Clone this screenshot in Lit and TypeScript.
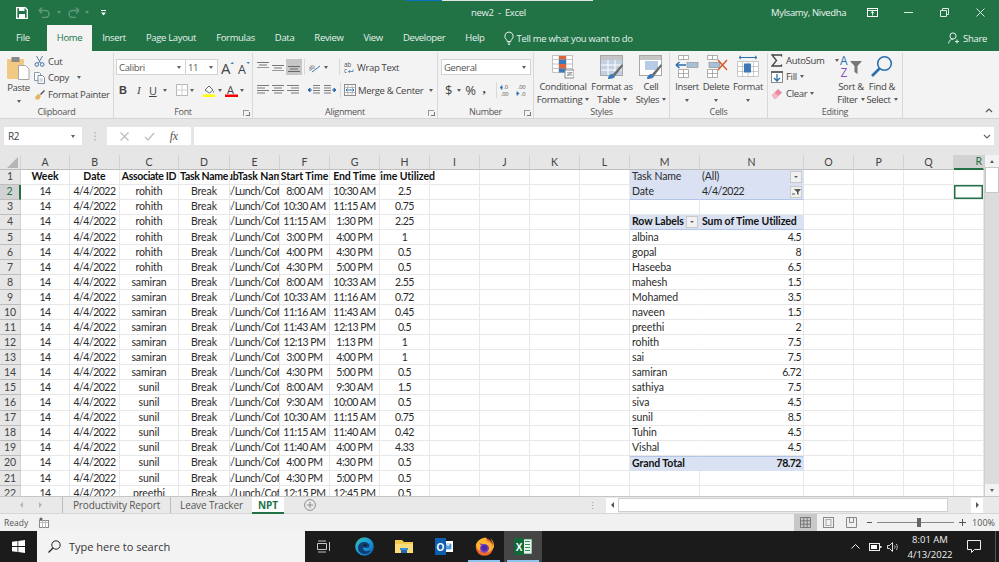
import { LitElement, html, css, svg } from 'lit';
import { customElement } from 'lit/decorators.js';

const ic = (w: number, h: number, body: unknown) =>
  html`<svg class="ic" width=${w} height=${h} viewBox="0 0 ${w} ${h}">${body}</svg>`;

const caret = html`<i class="caret"></i>`;
const gap = (w: number) => html`<span class="sp" style="width:${w}px"></span>`;

const COLS = ['A', 'B', 'C', 'D', 'E', 'F', 'G', 'H', 'I', 'J', 'K', 'L', 'M', 'N', 'O', 'P', 'Q', 'R'];

const TIMES = [
  ['8:00 AM', '10:30 AM', '2.5'], ['10:30 AM', '11:15 AM', '0.75'], ['11:15 AM', '1:30 PM', '2.25'],
  ['3:00 PM', '4:00 PM', '1'], ['4:00 PM', '4:30 PM', '0.5'], ['4:30 PM', '5:00 PM', '0.5'],
  ['8:00 AM', '10:33 AM', '2.55'], ['10:33 AM', '11:16 AM', '0.72'], ['11:16 AM', '11:43 AM', '0.45'],
  ['11:43 AM', '12:13 PM', '0.5'], ['12:13 PM', '1:13 PM', '1'], ['3:00 PM', '4:00 PM', '1'],
  ['4:30 PM', '5:00 PM', '0.5'], ['8:00 AM', '9:30 AM', '1.5'], ['9:30 AM', '10:00 AM', '0.5'],
  ['10:30 AM', '11:15 AM', '0.75'], ['11:15 AM', '11:40 AM', '0.42'], ['11:40 AM', '4:00 PM', '4.33'],
  ['4:00 PM', '4:30 PM', '0.5'], ['4:30 PM', '5:00 PM', '0.5'], ['12:15 PM', '12:45 PM', '0.5'],
];

const HEADERS = ['Week', 'Date', 'Associate ID', 'Task Name', 'SubTask Name', 'Start Time', 'End Time', 'Time Utilized'];

const PIVOT: [string, string][] = [
  ['albina', '4.5'], ['gopal', '8'], ['Haseeba', '6.5'], ['mahesh', '1.5'], ['Mohamed', '3.5'],
  ['naveen', '1.5'], ['preethi', '2'], ['rohith', '7.5'], ['sai', '7.5'], ['samiran', '6.72'],
  ['sathiya', '7.5'], ['siva', '4.5'], ['sunil', '8.5'], ['Tuhin', '4.5'], ['Vishal', '4.5'],
];

function who(row: number) {
  if (row <= 7) return 'rohith';
  if (row <= 14) return 'samiran';
  if (row <= 21) return 'sunil';
  return 'preethi';
}

const lines = (rows: [number, number][]) =>
  rows.map(([x, w], i) => svg`<rect x=${x} y=${1 + i * 2.5} width=${w} height="1" fill="#7b7b7b"/>`);

const filterBtn = (on = false) => html`<span class="fbtn">${on
  ? ic(9, 7, svg`<path d="M2 1h7L6.500 4v3L5 6V4z" fill="#555"/><path d="M0 6h3" stroke="#555"/>`)
  : html`<i class="caret"></i>`}</span>`;

const tabs = [
  ['File', ''], ['Home', 'on'], ['Insert', ''], ['Page Layout', ''], ['Formulas', ''],
  ['Data', ''], ['Review', ''], ['View', ''], ['Developer', ''], ['Help', ''],
];

@customElement('app-root')
export class AppRoot extends LitElement {
  static styles = css`
    :host {
      display: flex;
      flex-direction: column;
      width: 999px;
      height: 562px;
      overflow: hidden;
      position: relative;
      font-family: "Open Sans", "Noto Sans", sans-serif;
      font-size: 9.5px;
      letter-spacing: -0.33px;
      color: #444;
      background: #e6e6e6;
    }
    .ic { display: block; flex: none; }
    .sp { flex: none; display: block; }
    .caret {
      display: inline-block;
      flex: none;
      width: 0;
      height: 0;
      border-top: 3px solid #5f5f5f;
      border-left: 2.5px solid transparent;
      border-right: 2.5px solid transparent;
    }
    /* title + tabs */
    .green { background: #217346; color: #fff; height: 51px; flex: none; }
    .progress { position: absolute; left: 405px; top: 0; width: 188px; height: 1px; background: #dfe7e3; }
    .progress i { display: block; width: 37px; height: 1px; background: #0a72c4; }
    .title { display: flex; align-items: center; height: 25px; position: relative; }
    .qat { display: flex; align-items: center; padding-left: 16px; width: 400px; }
    .doc { position: absolute; left: 471px; top: 6px; line-height: 13px; color: #e8f0ec; }
    .win { margin-left: auto; display: flex; align-items: center; }
    .user { color: #eef4f0; width: 83px; white-space: nowrap; }
    .win .b { width: 36px; display: flex; justify-content: center; }
    .tabs { display: flex; align-items: flex-start; height: 26px; padding-left: 6px; position: relative; }
    .tab { padding: 0 10px; height: 26px; line-height: 26px; color: #e7f0eb; white-space: nowrap; }
    .tab.on { background: #f3f3f3; color: #217346; margin: 0 0 0 7px; }
    .tell { display: flex; align-items: center; gap: 2px; height: 26px; margin-left: 8px; color: #e7f0eb; }
    .share { margin-left: auto; display: flex; align-items: center; gap: 4px; height: 26px; padding-right: 12px; color: #eef4f0; }
    /* ribbon */
    .ribbon {
      display: flex;
      height: 67px;
      flex: none;
      background: #f3f3f3;
      border-bottom: 1px solid #d4d4d4;
      position: relative;
    }
    .grp {
      display: flex;
      flex-direction: column;
      flex: none;
      box-sizing: border-box;
      margin-top: 2px;
      border-right: 1px solid #d8d8d8;
      position: relative;
    }
    .body { flex: 1; display: flex; min-height: 0; }
    .lbl { height: 11px; line-height: 10px; text-align: center; font-size: 9px; color: #555; }
    .launch { position: absolute; right: 3px; bottom: 2px; width: 5px; height: 5px; border: 1px solid #999; border-width: 1px 0 0 1px; }
    .launch::after { content: ""; position: absolute; right: -1px; bottom: 0; width: 3px; height: 3px; border: solid #777; border-width: 0 1px 1px 0; }
    .big { display: flex; flex-direction: column; align-items: center; text-align: center; line-height: 12.5px; flex: none; }
    .big .t { display: flex; flex-direction: column; align-items: center; margin-top: 2px; white-space: nowrap; }
    .big .t span { display: flex; align-items: center; gap: 3px; }
    .big .t > .caret { margin-top: 5px; }
    .stack { display: flex; flex-direction: column; white-space: nowrap; margin-top: -3px; }
    .stack > div { display: flex; align-items: center; gap: 3px; height: 16.5px; flex: none; }
    .g-clip { width: 114px; }
    .g-clip .body { padding: 3px 0 0 5px; gap: 2px; }
    .g-font { width: 139px; }
    .g-font .body, .g-align .body, .g-num .body { flex-direction: column; padding-top: 6px; gap: 7px; }
    .row { display: flex; align-items: center; height: 16px; }
    .combo {
      height: 16px;
      box-sizing: border-box;
      background: #fff;
      border: 1px solid #d2d2d2;
      display: flex;
      align-items: center;
      justify-content: space-between;
      padding: 0 4px 0 2px;
      font-size: 9.5px;
      color: #555;
    }
    .g-font .body { padding-left: 2px; }
    .g-align { width: 185px; }
    .g-align .body { padding-left: 4px; position: relative; }
    .hl { background: #c6c6c6; width: 16px; height: 16px; display: flex; align-items: center; justify-content: center; }
    .vsep { width: 1px; height: 16px; background: #d8d8d8; flex: none; }
    .g-num { width: 96px; }
    .g-num .body { padding-left: 3px; }
    .g-styles { width: 136px; }
    .g-styles .body { padding: 2px 0 0 4px; gap: 2px; }
    .g-cells { width: 98px; }
    .g-cells .body { padding: 2px 0 0 4px; gap: 2px; }
    .g-edit { width: 135px; }
    .g-edit .body { padding: 2px 0 0 3px; }
    .g-edit .stack { margin-top: -3px; width: 65px; }
    .collapse { position: absolute; right: 6px; bottom: 5px; }
    /* formula bar */
    .fbar { display: flex; align-items: stretch; height: 18px; margin-top: 8px; padding: 0 5px 0 4px; flex: none; }
    .name {
      width: 78px;
      background: #fff;
      display: flex;
      align-items: center;
      justify-content: space-between;
      padding: 0 7px 0 4px;
      box-sizing: border-box;
      font-size: 10px;
    }
    .grip { width: 25px; display: flex; justify-content: center; align-items: center; }
    .fx { width: 84px; background: #fff; display: flex; align-items: center; justify-content: space-around; padding: 0 6px; box-sizing: border-box; }
    .fx em { font: italic 12px "Liberation Serif", serif; color: #555; }
    .input { flex: 1; margin-left: 3px; background: #fff; display: flex; align-items: center; justify-content: flex-end; padding-right: 3px; }
    /* sheet */
    .sheet { flex: none; height: 341px; margin-top: 10px; display: flex; overflow: hidden; background: #fff; }
    .grid {
      display: grid;
      width: 984px;
      grid-template-columns: 21px 49px 50px 59px 51px 50px 50px 50px 50px 50px 50px 50px 50px 70px 104px 50px 50px 50px 30px;
      grid-template-rows: 14.5px repeat(22, 15.07px);
      font-family: Lato, "Liberation Sans", sans-serif;
      font-size: 10.5px;
      letter-spacing: -0.08px;
      color: #2b2b2b;
      overflow: hidden;
    }
    .hd {
      background: #e6e6e6;
      border-right: 1px solid #d2d2d2;
      border-bottom: 1px solid #bdbdbd;
      display: flex;
      align-items: center;
      justify-content: center;
      color: #444;
      box-sizing: border-box;
      font-size: 10.5px;
      line-height: 1;
    }
    .hd.sel { background: #d2d2d2; color: #217346; border-bottom: 2px solid #217346; justify-content: flex-end; padding-right: 1px; }
    .hd.rsel { background: #d2d2d2; color: #217346; border-right: 2px solid #217346; }
    .corner { position: relative; }
    .corner::after {
      content: "";
      position: absolute;
      right: 2px;
      bottom: 1px;
      border-left: 11px solid transparent;
      border-bottom: 11px solid #b5b5b5;
    }
    .c {
      border-right: 1px solid #e8e8e8;
      border-bottom: 1px solid #e8e8e8;
      box-sizing: border-box;
      display: flex;
      align-items: center;
      justify-content: center;
      white-space: nowrap;
      overflow: hidden;
      line-height: 1;
      min-width: 0;
    }
    .c.n { letter-spacing: -0.48px; }
    .c.tight { letter-spacing: -0.35px; }
    .c.sub { letter-spacing: -0.4px; }
    .c.b { font-weight: 700; color: #111; }
    .c.free { overflow: visible; clip-path: inset(0 -60px 0 0); position: relative; z-index: 1; }
    .c.l { justify-content: flex-start; padding-left: 2px; }
    .c.r { justify-content: flex-end; padding-right: 2px; }
    .c.blue { background: #d9e1f2; border-color: #d9e1f2; }
    .c.blue.tl { border-bottom-color: #b4c6e7; }
    .c.topline { border-top: 1px solid #b4c6e7; }
    .c.nor { border-right-color: transparent; }
    .c.active { box-shadow: inset 0 0 0 1.5px #217346; }
    .c.between { justify-content: space-between; padding-right: 1px; }
    .fbtn {
      width: 12px;
      height: 12px;
      box-sizing: border-box;
      background: #f1f1f1;
      border: 1px solid #c9c9c9;
      display: flex;
      align-items: center;
      justify-content: center;
      flex: none;
    }
    .fbtn .caret { border-top-width: 2.5px; border-left-width: 2px; border-right-width: 2px; }
    .vs { width: 15px; background: #dcdcdc; display: flex; flex-direction: column; align-items: stretch; border-left: 1px solid #d0d0d0; box-sizing: border-box; }
    .arrow { height: 12px; background: #f3f3f3; display: flex; align-items: center; justify-content: center; flex: none; }
    .thumb { height: 26px; background: #fff; border: 1px solid #c8c8c8; box-sizing: border-box; flex: none; }
    .up { transform: rotate(180deg); }
    .vs .fill { flex: 1; }
    /* sheet tabs */
    .stabs { flex: none; height: 18px; display: flex; align-items: stretch; background: #e9e9e9; border-top: 1px solid #c6c6c6; box-sizing: border-box; border-bottom: 1px solid #d6d6d6; }
    .nav { width: 62px; display: flex; align-items: center; justify-content: center; gap: 16px; box-sizing: border-box; }
    .tri-l { width: 0; height: 0; border-right: 3px solid #b5b5b5; border-top: 3px solid transparent; border-bottom: 3px solid transparent; }
    .tri-r { width: 0; height: 0; border-left: 3px solid #b5b5b5; border-top: 3px solid transparent; border-bottom: 3px solid transparent; }
    .tri-l.dk { border-right-color: #555; }
    .tri-r.dk { border-left-color: #555; }
    .st { display: flex; align-items: center; justify-content: center; border-left: 1px solid #bdbdbd; box-sizing: border-box; font-size: 10px; letter-spacing: -0.12px; color: #555; white-space: nowrap; }
    .st.w1 { width: 108px; }
    .st.w2 { width: 82px; }
    .st.on { width: 32px; background: #fff; color: #217346; font-weight: 700; border-left: none; border-bottom: 2px solid #217346; margin-bottom: -1px; }
    .plus { margin-left: 20px; display: flex; align-items: center; }
    .hs { margin-left: auto; display: flex; align-items: center; padding-right: 16px; }
    .hs .grip2 { color: #999; margin-right: 9px; font-size: 9px; }
    .hs .a { width: 12px; height: 15px; background: #fff; display: flex; align-items: center; justify-content: center; }
    .hs .tr { width: 330px; height: 14px; background: #fff; border: 1px solid #cfcfcf; box-sizing: border-box; }
    .hs .gap { width: 23px; }
    /* status */
    .status { flex: none; height: 17px; display: flex; align-items: center; background: #f1f1f1; padding-left: 4px; font-size: 8.5px; letter-spacing: 0; color: #555; }
    .status .rec { margin-left: 11px; }
    .views { margin-left: auto; display: flex; align-items: center; height: 17px; }
    .views .v { width: 23px; height: 17px; display: flex; align-items: center; justify-content: center; }
    .views .v.on { background: #c8c8c8; }
    .zoom { display: flex; align-items: center; gap: 3px; margin-left: 4px; padding-right: 4px; color: #555; font-size: 9px; }
    .track { width: 77px; height: 1px; background: #888; position: relative; margin: 0 2px; }
    .track i { position: absolute; left: 40px; top: -4px; width: 4px; height: 9px; background: #666; }
    /* taskbar */
    .task { flex: 1; display: flex; align-items: stretch; background: #1b1b1b; color: #fff; letter-spacing: 0; }
    .t { display: flex; align-items: center; justify-content: center; flex: none; position: relative; }
    .search { width: 268px; background: #f3f3f3; color: #333; display: flex; align-items: center; gap: 8px; padding-left: 11px; box-sizing: border-box; font-size: 11px; flex: none; }
    .t.open::after { content: ""; position: absolute; left: 3px; right: 3px; bottom: 0; height: 2px; background: #8cc4ef; }
    .t.act { background: #454545; }
    .tray { margin-left: auto; display: flex; align-items: center; }
    .clock { width: 46px; text-align: center; line-height: 15px; font-size: 9.5px; color: #f0f0f0; margin-left: 8px; white-space: nowrap; }
    .notify { width: 42px; align-self: stretch; }
    .desk { width: 4px; align-self: stretch; border-left: 1px solid #555; box-sizing: border-box; }
  `;

  cell(row: number, c: number) {
    const col = COLS[c];
    // main table
    if (c < 8) {
      if (row === 1) {
        const free = c === 7 ? 'free' : '';
        const tight = c === 2 || c === 3 ? 'tight' : '';
        return html`<div class="c b ${free} ${tight}">${HEADERS[c]}</div>`;
      }
      const t = TIMES[row - 2];
      const vals = ['14', '4/4/2022', who(row), 'Break', 'Tea/Lunch/Coffee', t[0], t[1], t[2]];
      const kind = c === 4 ? 'sub' : c === 2 || c === 3 ? '' : 'n';
      return html`<div class="c ${kind}">${vals[c]}</div>`;
    }
    // pivot
    if (col === 'M' || col === 'N') {
      const m = col === 'M';
      if (row === 1) {
        return m
          ? html`<div class="c l blue">Task Name</div>`
          : html`<div class="c l blue between">(All)${filterBtn()}</div>`;
      }
      if (row === 2) {
        return m
          ? html`<div class="c l blue tl">Date</div>`
          : html`<div class="c l blue tl between n">4/4/2022${filterBtn(true)}</div>`;
      }
      if (row === 4) {
        return m
          ? html`<div class="c l b blue tl between">Row Labels${filterBtn()}</div>`
          : html`<div class="c l b blue tl">Sum of Time Utilized</div>`;
      }
      if (row >= 5 && row <= 19) {
        const p = PIVOT[row - 5];
        return m ? html`<div class="c l nor">${p[0]}</div>` : html`<div class="c r n">${p[1]}</div>`;
      }
      if (row === 20) {
        return m
          ? html`<div class="c l b blue nor topline">Grand Total</div>`
          : html`<div class="c r b blue topline n">78.72</div>`;
      }
    }
    if (col === 'R' && row === 2) return html`<div class="c active"></div>`;
    return html`<div class="c"></div>`;
  }

  renderTitle() {
    return html`
      <div class="title">
        <div class="qat">
          ${ic(12, 12, svg`<path d="M.7.7h8.600l2 2v8.600H.7z" fill="none" stroke="#fff" stroke-width="1.300"/><rect x="3" y="1" width="5.500" height="3" fill="#fff"/><rect x="3" y="7" width="6" height="4" fill="#fff"/>`)}
          ${gap(10)}
          ${ic(12, 11, svg`<path d="M1 3.500h6.500a3.500 3.500 0 0 1 0 7H4M1 3.500l3-3M1 3.500l3 3" fill="none" stroke="#5f9a7c" stroke-width="1.400"/>`)}
          ${gap(7)}<i class="caret" style="border-top-color:#5f9a7c"></i>
          ${gap(7)}
          ${ic(12, 11, svg`<path d="M11 3.500H4.500a3.500 3.500 0 0 0 0 7H8M11 3.500l-3-3M11 3.500l-3 3" fill="none" stroke="#5f9a7c" stroke-width="1.400"/>`)}
          ${gap(5)}<i class="caret" style="border-top-color:#5f9a7c"></i>
          ${gap(12)}
          ${ic(5, 6, svg`<rect width="5" height="1" fill="#fff"/><path d="M0 2.500h5L2.500 5.500z" fill="#fff"/>`)}
        </div>
        <div class="doc">new2&nbsp; -&nbsp; Excel</div>
        <div class="win">
          <div class="user">Mylsamy, Nivedha</div>
          <div class="b">${ic(11, 10, svg`<rect x=".5" y=".5" width="10" height="8" fill="none" stroke="#fff"/><path d="M.5 2.500h10M5.500 7.500v-4M3.800 5l1.700-1.600L7.200 5" fill="none" stroke="#fff" stroke-width=".9"/>`)}</div>
          <div class="b">${ic(9, 1, svg`<rect width="9" height="1" fill="#dfe9e4"/>`)}</div>
          <div class="b">${ic(9, 9, svg`<path d="M.5 2.500h6v6h-6zM2.500 2.500v-2h6v6h-2" fill="none" stroke="#dfe9e4"/>`)}</div>
          <div class="b" style="padding-right:1px">${ic(9, 9, svg`<path d="M.5.5l8 8M8.500.5l-8 8" stroke="#dfe9e4" fill="none"/>`)}</div>
        </div>
      </div>`;
  }

  renderTabs() {
    return html`
      <div class="tabs">
        ${tabs.map(([t, k]) => html`<div class="tab ${k}">${t}</div>`)}
        <div class="tell">
          ${ic(12, 14, svg`<path d="M6 1a4.300 4.300 0 0 0-2.600 7.600c.6.600.7 1.200.8 1.900h3.600c.1-.7.2-1.300.8-1.900A4.300 4.300 0 0 0 6 1zM4.600 12h2.800M5.200 13.500h1.600" fill="none" stroke="#fff" stroke-width=".9"/>`)}
          Tell me what you want to do
        </div>
        <div class="share">
          ${ic(11, 12, svg`<circle cx="5" cy="4" r="3.100" fill="none" stroke="#e5efe9"/><path d="M.6 11.500c.4-3 2.200-4.400 4.400-4.400M7 9.500h4M9 7.500v4" fill="none" stroke="#e5efe9"/>`)}
          Share
        </div>
      </div>`;
  }

  renderClipboard() {
    return html`
      <div class="grp g-clip">
        <div class="body">
          <div class="big" style="width:27px">
            ${ic(24, 24, svg`<rect x="0" y="3" width="17" height="20" rx="1" fill="#f2c983"/><rect x="4.500" y="1" width="8" height="5" fill="#8a8a8a"/><path d="M11.500 9.500h7l3.500 3.500v10.500H11.500z" fill="#fff" stroke="#a5a5a5"/>`)}
            <div class="t">Paste<i class="caret"></i></div>
          </div>
          <div class="stack">
            <div>${ic(11, 12, svg`<path d="M2.500 1l4 7M8.500 1l-4 7" stroke="#5a7fa3" fill="none"/><circle cx="2.800" cy="9.500" r="1.800" fill="none" stroke="#3c6fa5"/><circle cx="8.200" cy="9.500" r="1.800" fill="none" stroke="#3c6fa5"/>`)}Cut</div>
            <div>${ic(11, 12, svg`<path d="M.5.5h5l1 1v7h-6z" fill="#fff" stroke="#8a9bb0"/><path d="M4 3.500h4.500l2 2v6H4z" fill="#fff" stroke="#7a8ea6"/><path d="M5.500 7h3.500M5.500 9h3.500" stroke="#b5b5b5"/>`)}Copy${gap(2)}${caret}</div>
            <div>${ic(11, 11, svg`<path d="M6 5l4-4 1 1-4 4z" fill="#555"/><path d="M1.500 7.500l3-3 2.500 2.500-2 3.500H1l1.500-1.500-1.500.2z" fill="#e3b565"/>`)}Format Painter</div>
          </div>
        </div>
        <div class="lbl">Clipboard</div>
      </div>`;
  }

  renderFont() {
    return html`
      <div class="grp g-font">
        <div class="body">
          <div class="row">
            <div class="combo" style="width:70px">Calibri${caret}</div>
            <div class="combo" style="width:33px;margin-left:-1px">11${caret}</div>
            ${gap(3)}
            <svg class="ic" width="14" height="13" viewBox="0 0 14 13"><text x="0" y="12.500" font-size="15" fill="#444" font-family="Open Sans">A</text><path d="M9.500 3l1.700-2 1.700 2z" fill="#3d7ab5"/></svg>
            ${gap(2)}
            <svg class="ic" width="14" height="13" viewBox="0 0 14 13"><text x="1" y="12.500" font-size="12.500" fill="#444" font-family="Open Sans">A</text><path d="M9.500 1l1.700 2 1.700-2z" fill="#3d7ab5"/></svg>
          </div>
          <div class="row" style="padding-left:3px">
            <b style="font-size:11px;width:16px;font-family:'Liberation Sans'">B</b>
            <em style="font:italic 11px 'Liberation Serif';width:12px;padding-left:2px">I</em>
            <u style="font-size:11px;width:14px">U</u>${caret}
            ${gap(8.5)}
            ${ic(12, 12, svg`<rect x=".5" y=".5" width="11" height="11" fill="#fff" stroke="#b9b9b9"/><path d="M6 .5v11M.5 6h11" stroke="#cfcfcf"/>`)}
            ${gap(2.5)}${caret}
            ${gap(8.5)}
            ${ic(12, 13, svg`<path d="M2 6l4-4 4 4-3.500 3z" fill="#fff" stroke="#666"/><path d="M10 6.500c1 1.200 1.500 2 .6 2.600-.6-.4-.8-1.400-.6-2.600z" fill="#6d8fb3"/><rect x="0" y="10.500" width="12" height="2.500" fill="#ffff00"/>`)}
            ${gap(3.5)}${caret}
            ${gap(2.5)}
            <svg class="ic" width="13" height="13" viewBox="0 0 13 13"><text x="2" y="9.500" font-size="11" fill="#444" font-family="Open Sans">A</text><rect x="0" y="10.500" width="13" height="2.500" fill="#f00000"/></svg>
            ${gap(2.5)}${caret}
          </div>
        </div>
        <div class="lbl">Font</div><i class="launch"></i>
      </div>`;
  }

  renderAlign() {
    const v = (y: number) => ic(12, 11, svg`<rect x="0" y=${y} width="12" height="1" fill="#777"/><rect x="2" y=${y + 2.5} width="8" height="1" fill="#777"/><rect x="0" y=${y + 5} width="12" height="1" fill="#999"/>`);
    return html`
      <div class="grp g-align">
        <div class="body">
          <div class="row">
            ${v(0)}${gap(3)}${v(3)}${gap(2)}
            <div class="hl">${ic(12, 11, svg`<rect y="4" width="12" height="1" fill="#666"/><rect x="2" y="6.500" width="8" height="1" fill="#666"/><rect y="9" width="12" height="1" fill="#666"/>`)}</div>
            ${gap(2)}<div class="vsep"></div>${gap(4)}
            ${ic(12, 12, svg`<text x="0" y="8" font-size="6" fill="#555" transform="rotate(-30 4 8)" font-family="Open Sans">ab</text><path d="M3 11l8-6" stroke="#3d7ab5"/>`)}
            ${gap(3)}${caret}
            ${gap(11)}<div class="vsep"></div>${gap(4)}
            <svg class="ic" width="11" height="13" viewBox="0 0 11 13"><text x="0" y="5.500" font-size="6.500" fill="#555" font-family="Open Sans">ab</text><text x="0" y="12" font-size="6.500" fill="#555" font-family="Open Sans">c</text><path d="M4.500 10.500h4.500v-2M4.500 10.500l1.500-1.300M4.500 10.500l1.500 1.300" stroke="#3d7ab5" fill="none" stroke-width=".8"/></svg>
            ${gap(2)}<span style="white-space:nowrap">Wrap Text</span>
          </div>
          <div class="row">
            ${ic(12, 12, lines([[0, 12], [0, 8], [0, 12], [0, 8]]))}${gap(3)}
            ${ic(12, 12, lines([[0, 12], [2, 8], [0, 12], [2, 8]]))}${gap(3)}
            ${ic(12, 12, lines([[0, 12], [4, 8], [0, 12], [4, 8]]))}
            ${gap(9)}
            ${ic(12, 12, svg`${lines([[5, 7], [5, 7], [5, 7], [5, 7]])}<path d="M0 6h4M0 6l2-2v4z" stroke="#2b6fb0" fill="#2b6fb0"/>`)}${gap(4)}
            ${ic(12, 12, svg`${lines([[0, 7], [0, 7], [0, 7], [0, 7]])}<path d="M12 6H8M12 6l-2-2v4z" stroke="#2b6fb0" fill="#2b6fb0"/>`)}
            ${gap(4)}<div class="vsep"></div>${gap(3)}
            ${ic(12, 12, svg`<rect x=".5" y=".5" width="11" height="11" fill="#fff" stroke="#8a8a8a"/><path d="M.5 3.500h11M.5 8.500h11M4 .5v3M8 .5v3M4 8.500v3M8 8.500v3" stroke="#b5b5b5" fill="none"/><path d="M2 6h8" stroke="#2b6fb0"/><path d="M3.500 4.500L2 6l1.500 1.500M8.500 4.500L10 6 8.500 7.500" stroke="#2b6fb0" fill="none"/>`)}
            ${gap(2)}<span style="white-space:nowrap">Merge &amp; Center</span>
            ${gap(6)}${caret}
          </div>
        </div>
        <div class="lbl">Alignment</div><i class="launch"></i>
      </div>`;
  }

  renderNumber() {
    return html`
      <div class="grp g-num">
        <div class="body">
          <div class="row"><div class="combo" style="width:90px">General${caret}</div></div>
          <div class="row" style="padding-left:4px">
            <span style="font-size:13px;width:11.5px">$</span>${caret}
            <span style="font-size:13px;width:16px;text-align:center;margin-left:2px">%</span>
            ${gap(4)}
            <b style="font:700 13px 'Liberation Serif';width:13px;margin-top:-3px">,</b>
            <div class="vsep"></div>${gap(3)}
            <svg class="ic" width="12" height="12" viewBox="0 0 12 12"><path d="M0 3.500h3M0 3.500l2-2v4z" stroke="#2b6fb0" fill="#2b6fb0" stroke-width=".6"/><text x="3.500" y="5" font-size="5.800" fill="#555" font-family="Open Sans">.0</text><text x="1" y="11.500" font-size="5.800" fill="#555" font-family="Open Sans">.00</text></svg>
            ${gap(4)}
            <svg class="ic" width="12" height="12" viewBox="0 0 12 12"><text x="2" y="5" font-size="5.800" fill="#555" font-family="Open Sans">.00</text><path d="M0 9.500h3M3 9.500l-2-2v4z" stroke="#2b6fb0" fill="#2b6fb0" stroke-width=".6"/><text x="5" y="11.500" font-size="5.800" fill="#555" font-family="Open Sans">.0</text></svg>
          </div>
        </div>
        <div class="lbl">Number</div><i class="launch"></i>
      </div>`;
  }

  renderStyles() {
    const tableIco = svg`
      <rect x=".5" y=".5" width="22" height="20" fill="#fff" stroke="#a8a8a8"/>
      <rect x="1" y="1" width="21" height="4" fill="#c5c5c5"/>`;
    return html`
      <div class="grp g-styles">
        <div class="body">
          <div class="big" style="width:50px">
            ${ic(22, 24, svg`<path d="M.5.5h20v17h-20zM7 .5v17M14 .5v17M.5 4.500h20M.5 9h20M.5 13.500h20" fill="#fff" stroke="#b5b5b5" stroke-width=".8"/><rect x="7" y="1" width="7" height="3.500" fill="#e0633a"/><rect x="7" y="4.500" width="7" height="4.500" fill="#3d7ab5"/><rect x="7" y="9" width="7" height="4.500" fill="#e0633a"/><rect x="7" y="13.500" width="7" height="4" fill="#3d7ab5"/><rect x="13" y="15" width="9" height="8" fill="#fff" stroke="#888"/><path d="M15.500 20.500l4-3M15 17.800h5.500M15 20h5.500" stroke="#666" stroke-width=".7"/>`)}
            <div class="t"><span>Conditional</span><span>Formatting ${caret}</span></div>
          </div>
          <div class="big" style="width:44px">
            ${ic(24, 24, svg`${tableIco}<rect x="1" y="5" width="21" height="15" fill="#b6c8de" opacity=".85"/><path d="M8 5v15M15 5v15M1 10h21M1 15h21" stroke="#fff"/><path d="M22 9L13 19l2 2 8-10z" fill="#6b6b6b"/><path d="M8 24c0-3 2-5 5-5l2 2c0 2-3 3-7 3z" fill="#3d7ab5"/>`)}
            <div class="t"><span>Format as</span><span>Table ${caret}</span></div>
          </div>
          <div class="big" style="width:30px">
            ${ic(24, 24, svg`${tableIco}<rect x="6" y="6" width="13" height="9" fill="#b6cce6"/><path d="M22 9L13 19l2 2 8-10z" fill="#6b6b6b"/><path d="M8 24c0-3 2-5 5-5l2 2c0 2-3 3-7 3z" fill="#3d7ab5"/>`)}
            <div class="t"><span>Cell</span><span>Styles ${caret}</span></div>
          </div>
        </div>
        <div class="lbl">Styles</div>
      </div>`;
  }

  renderCells() {
    const cellsBase = svg`<path d="M3.500 .5h10v4h-10zM8.500 .5v4M3.500 14.500h10v8h-10zM3.500 18.500h10M8.500 14.500v8" fill="#fff" stroke="#9a9a9a" stroke-width=".8"/>`;
    return html`
      <div class="grp g-cells">
        <div class="body">
          <div class="big" style="width:26px">
            ${ic(24, 24, svg`${cellsBase}<rect x="12" y="7.500" width="11" height="5" fill="#a9bfd8" stroke="#8a8a8a" stroke-width=".6"/><path d="M1 10h10M1 10l3.500-3M1 10l3.500 3" stroke="#2b6fb0" stroke-width="1.500" fill="none"/>`)}
            <div class="t"><span>Insert</span>${caret}</div>
          </div>
          <div class="big" style="width:28px">
            ${ic(24, 24, svg`${cellsBase}<rect x="5" y="7.500" width="11" height="5" fill="#a9bfd8" stroke="#8a8a8a" stroke-width=".6"/><path d="M14 5l9 10M23 5l-9 10" stroke="#d9552c" stroke-width="1.400"/>`)}
            <div class="t"><span>Delete</span>${caret}</div>
          </div>
          <div class="big" style="width:32px">
            ${ic(24, 24, svg`<path d="M1.500 6.500h21v15h-21zM6.500 6.500v15M12 6.500v15M17.500 6.500v15M1.500 11.500h21M1.500 16.500h21" fill="#fff" stroke="#b5b5b5" stroke-width=".7"/><rect x="8" y="8.500" width="7" height="9" fill="#3d7ab5"/><path d="M3 2.500h18M3 2.500l2-1.700M3 2.500l2 1.700M21 2.500l-2-1.700M21 2.500l-2 1.700" stroke="#2b6fb0" fill="none"/>`)}
            <div class="t"><span>Format</span>${caret}</div>
          </div>
        </div>
        <div class="lbl">Cells</div>
      </div>`;
  }

  renderEditing() {
    return html`
      <div class="grp g-edit">
        <div class="body">
          <div class="stack">
            <div>
              <svg class="ic" width="12" height="13" viewBox="0 0 12 13"><path d="M10.500 2.500V1H1l4.500 5.500L1 12h9.500v-1.500" fill="none" stroke="#444" stroke-width="1.300"/></svg>
              AutoSum${gap(5)}${caret}
            </div>
            <div>${ic(12, 12, svg`<rect x=".5" y=".5" width="11" height="11" fill="#fff" stroke="#8a8a8a"/><rect y="0" width="12" height="2" fill="#666"/><path d="M6 3v7M3 7l3 3 3-3" stroke="#2b6fb0" stroke-width="1.300" fill="none"/>`)}Fill ${caret}</div>
            <div>${ic(12, 11, svg`<path d="M1 7l6-6 4 3.500-6 6H3z" fill="#e98aa0"/><path d="M1 7l2.500-2.500 4 3.500L5 10.500H3z" fill="#f4b7c4"/>`)}Clear ${caret}</div>
          </div>
          <div class="big" style="width:30px">
            <svg class="ic" width="24" height="24" viewBox="0 0 24 24"><text x="1" y="10" font-size="12" fill="#2b6fb0" font-family="Open Sans">A</text><text x="1.500" y="21.500" font-size="12" fill="#8a4fc0" font-family="Open Sans">Z</text><path d="M11 6h12l-4.500 5v8l-3-2v-6z" fill="#777"/></svg>
            <div class="t"><span>Sort &amp;</span><span>Filter ${caret}</span></div>
          </div>
          <div class="big" style="width:32px">
            ${ic(24, 24, svg`<circle cx="14.500" cy="8.500" r="6.800" fill="none" stroke="#2b6fb0" stroke-width="1.600"/><path d="M9.500 13.500L2 21" stroke="#2b6fb0" stroke-width="2.600"/>`)}
            <div class="t"><span>Find &amp;</span><span>Select ${caret}</span></div>
          </div>
        </div>
        <div class="lbl">Editing</div>
      </div>`;
  }

  renderFormula() {
    return html`
      <div class="fbar">
        <div class="name">R2${caret}</div>
        <div class="grip">${ic(2, 9, svg`<path d="M1 0v1.500M1 3.500V5M1 7v1.500" stroke="#aaa" stroke-width="1.200"/>`)}</div>
        <div class="fx">
          ${ic(9, 9, svg`<path d="M.5.5l8 8M8.500.5l-8 8" stroke="#bdbdbd" fill="none" stroke-width="1.200"/>`)}
          ${ic(11, 9, svg`<path d="M1 5l3 3 6-7" stroke="#bdbdbd" fill="none" stroke-width="1.200"/>`)}
          <em>fx</em>
        </div>
        <div class="input">${ic(8, 5, svg`<path d="M1 1l3 3 3-3" stroke="#666" fill="none" stroke-width="1.200"/>`)}</div>
      </div>`;
  }

  renderSheet() {
    const rows = Array.from({ length: 22 }, (_, i) => i + 1);
    return html`
      <div class="sheet">
        <div class="grid">
          <div class="hd corner"></div>
          ${COLS.map((c) => html`<div class="hd ${c === 'R' ? 'sel' : ''}">${c}</div>`)}
          ${rows.map((r) => html`
            <div class="hd ${r === 2 ? 'rsel' : ''}">${r}</div>
            ${COLS.map((_, c) => this.cell(r, c))}
          `)}
        </div>
        <div class="vs">
          <div class="arrow"><i class="caret up"></i></div>
          <div class="thumb"></div>
          <div class="fill"></div>
          <div class="arrow"><i class="caret"></i></div>
        </div>
      </div>`;
  }

  renderSheetTabs() {
    return html`
      <div class="stabs">
        <div class="nav"><i class="tri-l"></i><i class="tri-r"></i></div>
        <div class="st w1">Productivity Report</div>
        <div class="st w2">Leave Tracker</div>
        <div class="st on">NPT</div>
        <div class="plus">${ic(12, 12, svg`<circle cx="6" cy="6" r="5.400" fill="none" stroke="#8f8f8f"/><path d="M6 3v6M3 6h6" stroke="#8f8f8f"/>`)}</div>
        <div class="hs">
          <span class="grip2">⋮</span>
          <div class="a"><i class="tri-l dk"></i></div>
          <div class="tr"></div>
          <div class="gap"></div>
          <div class="a"><i class="tri-r dk"></i></div>
        </div>
      </div>`;
  }

  renderStatus() {
    return html`
      <div class="status">
        Ready
        <span class="rec">${ic(10, 11, svg`<circle cx="2" cy="2" r="1.600" fill="#666"/><rect x=".5" y="3.500" width="9" height="7" fill="#fff" stroke="#888"/><path d="M.5 5.500h9M3.500 3.500v7M6.500 3.500v7" stroke="#bbb" fill="none"/>`)}</span>
        <div class="views">
          <div class="v on">${ic(11, 11, svg`<path d="M.5.5h10v10H.5zM3.800.5v10M7.200.5v10M.5 3.800h10M.5 7.200h10" stroke="#666" fill="none" stroke-width=".8"/>`)}</div>
          <div class="v">${ic(11, 11, svg`<rect x=".5" y=".5" width="10" height="10" fill="none" stroke="#888"/><rect x="3" y="2.500" width="5" height="6" fill="none" stroke="#aaa"/>`)}</div>
          <div class="v">${ic(11, 11, svg`<path d="M.5.5h10v10H.5zM3.500.5v5h4v-5" fill="none" stroke="#888"/>`)}</div>
          <div class="zoom">
            ${ic(5, 1, svg`<rect width="5" height="1.200" fill="#555"/>`)}
            <div class="track"><i></i></div>
            ${ic(7, 7, svg`<path d="M3.500 0v7M0 3.500h7" stroke="#555"/>`)}
            <span style="margin-left:3px">100%</span>
          </div>
        </div>
      </div>`;
  }

  renderTaskbar() {
    return html`
      <div class="task">
        <div class="t" style="width:37px">${ic(13, 13, svg`<path d="M0 1.800L5.500 1v5H0zM6.300.9L13 0v6H6.300zM0 7h5.500v5L0 11.200zM6.300 7H13v6l-6.700-.9z" fill="#fff"/>`)}</div>
        <div class="search">
          ${ic(13, 13, svg`<circle cx="8" cy="5" r="4.200" fill="none" stroke="#222"/><path d="M5 8l-4.500 4.500" stroke="#222" stroke-width="1.200"/>`)}
          Type here to search
        </div>
        <div class="t" style="width:38px">${ic(14, 13, svg`<path d="M.5 3.500h9v6h-9zM1 1h8M1 12h8M12.500 2v9" fill="none" stroke="#c5c5c5"/>`)}</div>
        <div class="t" style="width:42px">${ic(19, 19, svg`<defs><linearGradient id="eg" x1="0" y1="0" x2="1" y2="1"><stop offset="0" stop-color="#35c1a0"/><stop offset=".5" stop-color="#1b9de2"/><stop offset="1" stop-color="#0c59a4"/></linearGradient></defs><circle cx="9.500" cy="9.500" r="9.300" fill="url(#eg)"/><path d="M3 11c0-4 3-6 6.500-6 3 0 5 1.800 5 4 0 1.200-1 1.800-2.800 1.800H8c0 2.500 2 3.500 4 3.500 1.500 0 3-.4 4-1.200-1 2.500-3.500 4-6 4-4 0-7-2.500-7-6.100z" fill="#0f3f75"/><path d="M8.500 9c.3-1.200 1.200-1.800 2-1.800 1 0 1.500.8 1.300 1.800z" fill="#1b1b1b"/>`)}</div>
        <div class="t" style="width:38px">${ic(18, 15, svg`<path d="M0 1h7l2 2h9v11H0z" fill="#f3c94f"/><rect x="0" y="5" width="18" height="9" fill="#fbdd7c"/><rect x="5" y="9" width="8" height="2" fill="#3d8fd4"/><rect x="6" y="11" width="6" height="3" fill="#2567ad"/>`)}</div>
        <div class="t" style="width:42px"><svg class="ic" width="18" height="17" viewBox="0 0 18 17"><rect x="8" y="3" width="10" height="11" fill="#fff"/><path d="M10 6l3 2.500L16 6M10 6h6v5h-6z" fill="#4fa3e0" stroke="#1769b8" stroke-width=".5"/><rect x="0" y="0" width="11" height="17" fill="#0f5fb0"/><text x="5.500" y="12.500" font-size="10" font-weight="700" fill="#fff" text-anchor="middle" font-family="Liberation Sans">O</text></svg></div>
        <div class="t open" style="width:38px">${ic(19, 19, svg`<circle cx="9.500" cy="10" r="8.800" fill="#ef6a2c"/><path d="M1 8C3 2 9 0 12 1c-1 1-1 2 0 3 3 1 5 3 6 6 0-4-1-7-3-9 3 2 4 5 4 9a9.500 9 0 0 1-18-2z" fill="#fcb52d"/><path d="M4 5c1 2 3 2 5 2 3 0 5 2 5 4a4.500 4.500 0 1 1-8-2.500z" fill="#7a3fc2"/><circle cx="9.500" cy="11" r="2.800" fill="#4a2aa0"/>`)}</div>
        <div class="t open act" style="width:38px;margin-left:1px"><svg class="ic" width="18" height="17" viewBox="0 0 18 17"><rect x="9" y="1" width="9" height="15" fill="#e8f3ec" stroke="#1d7044" stroke-width=".7"/><path d="M11 3.500h5M11 6.500h5M11 9.500h5M11 12.500h5" stroke="#2d9258"/><rect x="0" y="0" width="10" height="17" fill="#11693a"/><text x="5" y="12.500" font-size="10" font-weight="700" fill="#fff" text-anchor="middle" font-family="Liberation Sans">X</text></svg></div>
        <div class="tray">
          ${ic(9, 5, svg`<path d="M.5 4.500l4-4 4 4" stroke="#eee" fill="none"/>`)}
          ${gap(9)}
          ${ic(13, 8, svg`<rect x=".5" y=".5" width="10" height="7" fill="none" stroke="#eee"/><rect x="2" y="2" width="6" height="4" fill="#fff"/><rect x="11" y="3" width="1.500" height="2" fill="#eee"/>`)}
          ${gap(5)}
          ${ic(12, 10, svg`<path d="M.5 3.500h2l3-3v9l-3-3h-2z" fill="none" stroke="#ddd"/><path d="M7.500 3.500c.7 1 .7 2 0 3M9.300 2c1.300 2 1.300 4 0 6" fill="none" stroke="#ddd" stroke-width=".8"/>`)}
          <div class="clock">8:01 AM<br />4/13/2022</div>
          <div class="t notify">${ic(14, 13, svg`<path d="M.5.5h13v9H7.500l-3 3v-3h-4z" fill="none" stroke="#eee"/>`)}</div>
          <div class="desk"></div>
        </div>
      </div>`;
  }

  render() {
    return html`
      <div class="green">
        ${this.renderTitle()}
        ${this.renderTabs()}
      </div>
      <div class="progress"><i></i></div>
      <div class="ribbon">
        ${this.renderClipboard()}
        ${this.renderFont()}
        ${this.renderAlign()}
        ${this.renderNumber()}
        ${this.renderStyles()}
        ${this.renderCells()}
        ${this.renderEditing()}
        <div class="collapse">${ic(8, 5, svg`<path d="M1 4l3-3 3 3" stroke="#555" fill="none" stroke-width="1.200"/>`)}</div>
      </div>
      ${this.renderFormula()}
      ${this.renderSheet()}
      ${this.renderSheetTabs()}
      ${this.renderStatus()}
      ${this.renderTaskbar()}
    `;
  }
}
